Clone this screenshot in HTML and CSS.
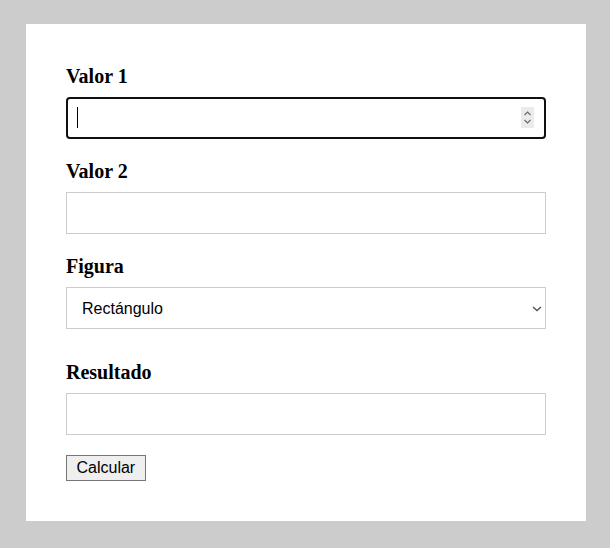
FILE: index.html
```html
<!DOCTYPE html>
<html lang="es">
<head>
<meta charset="utf-8">
<title>Calculadora</title>
<link rel="stylesheet" href="styles.css">
</head>
<body>
<form class="card">
  <label class="lbl" for="v1">Valor 1</label>
  <div class="wrap">
    <input class="field active" id="v1" type="number">
    <span class="caret"></span>
    <span class="spin">
      <svg width="13" height="21" viewBox="0 0 13 21">
        <path d="M3.5 8 L6.5 5 L9.5 8" fill="none" stroke="#6b6b6b" stroke-width="1.2"/>
        <path d="M3.5 13 L6.5 16 L9.5 13" fill="none" stroke="#6b6b6b" stroke-width="1.2"/>
      </svg>
    </span>
  </div>
  <label class="lbl" for="v2">Valor 2</label>
  <div class="wrap">
    <input class="field" id="v2" type="number">
  </div>
  <label class="lbl" for="fig">Figura</label>
  <div class="wrap wrap-sel">
    <select class="field sel" id="fig">
      <option>Rectángulo</option>
      <option>Triángulo</option>
      <option>Círculo</option>
    </select>
    <svg class="chev" width="10" height="6" viewBox="0 0 10 6">
      <path d="M1 1 L5 4.5 L9 1" fill="none" stroke="#555" stroke-width="1.4"/>
    </svg>
  </div>
  <label class="lbl" for="res">Resultado</label>
  <div class="wrap">
    <input class="field" id="res" type="text">
  </div>
  <button class="btn" type="button">Calcular</button>
</form>
</body>
</html>
```
FILE: styles.css
```css
html, body {
  margin: 0;
  padding: 0;
}
body {
  background: #cccccc;
  padding: 24px 24px 27px 26px;
  font-family: "Liberation Serif", serif;
}
.card {
  background: #ffffff;
  width: 480px;
  padding: 40px;
  display: flex;
  flex-direction: column;
  align-items: flex-start;
}
.lbl {
  display: block;
  font-weight: bold;
  font-size: 20px;
  line-height: 21px;
  padding-top: 2px;
  margin-bottom: 10px;
  color: #000;
}
.wrap {
  position: relative;
  width: 480px;
  height: 42px;
  margin-bottom: 20px;
}
.wrap-sel {
  margin-bottom: 31px;
}
.field {
  box-sizing: border-box;
  display: block;
  width: 480px;
  height: 42px;
  border: 1px solid #cccccc;
  border-radius: 0;
  padding: 0 15px;
  font-family: "Liberation Sans", Arial, sans-serif;
  font-size: 16px;
  margin: 0;
  background: #fff;
  color: #000;
  outline: none;
  -moz-appearance: textfield;
}
.field::-webkit-inner-spin-button,
.field::-webkit-outer-spin-button {
  -webkit-appearance: none;
  margin: 0;
}
.active {
  border: 2px solid #101010;
  border-radius: 4px;
}
.caret {
  position: absolute;
  left: 11px;
  top: 10px;
  width: 1px;
  height: 21px;
  background: #000;
}
.spin {
  position: absolute;
  left: 455px;
  top: 10px;
  width: 13px;
  height: 21px;
  background: #ebebeb;
  display: flex;
}
.sel {
  -webkit-appearance: none;
  appearance: none;
}
.chev {
  position: absolute;
  left: 466px;
  top: 19px;
}
.btn {
  font-family: "Liberation Sans", Arial, sans-serif;
  font-size: 16px;
  padding: 3px 9.5px;
  border: 1px solid #767676;
  border-radius: 0;
  background: #efefef;
  color: #000;
  margin: 0;
}
```
